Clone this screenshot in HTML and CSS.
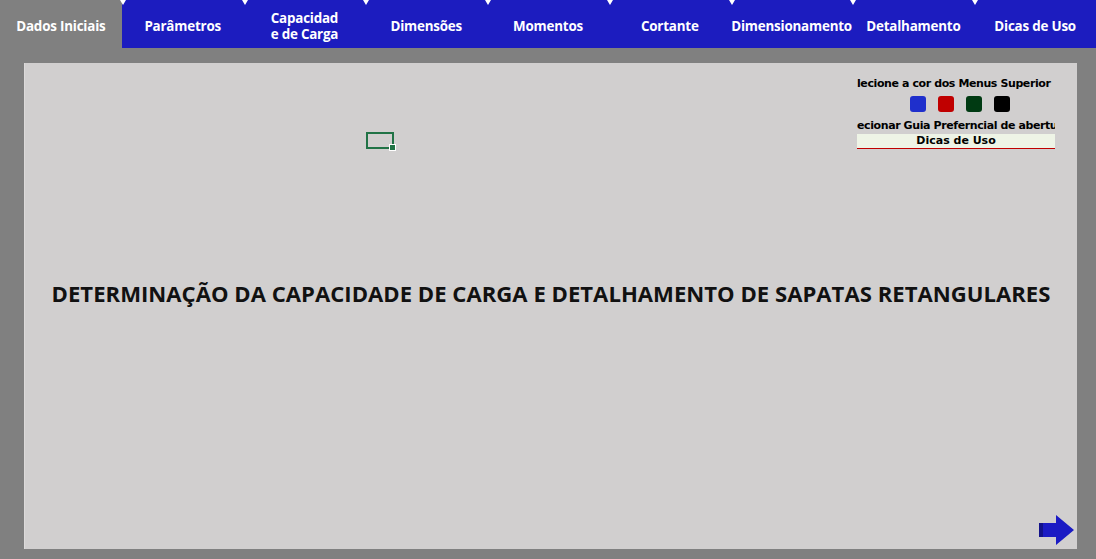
FILE: index.html
```html
<!DOCTYPE html>
<html lang="pt">
<head>
    <meta charset="UTF-8">
    <title>Sapatas Retangulares</title>
    <link rel="stylesheet" href="styles.css">
</head>
<body>
    <nav class="tabs">
        <div class="tab active">Dados Iniciais</div>
        <div class="tab">Parâmetros</div>
        <div class="tab">Capacidad<br>e de Carga</div>
        <div class="tab">Dimensões</div>
        <div class="tab">Momentos</div>
        <div class="tab">Cortante</div>
        <div class="tab">Dimensionamento</div>
        <div class="tab">Detalhamento</div>
        <div class="tab last">Dicas de Uso</div>
    </nav>

    <div class="sheet-area">
        <div class="sheet">
            <!-- selected cell -->
            <div class="cell-select"></div>

            <!-- menu colour picker -->
            <div class="picker">
                <p class="picker-label">lecione a cor dos Menus Superior</p>
                <div class="swatches">
                    <span class="swatch blue"></span>
                    <span class="swatch red"></span>
                    <span class="swatch green"></span>
                    <span class="swatch black"></span>
                </div>
                <p class="picker-label">ecionar Guia Preferncial de abertura</p>
                <div class="picker-field">Dicas de Uso</div>
            </div>

            <h1 class="title">DETERMINAÇÃO DA CAPACIDADE DE CARGA E DETALHAMENTO DE SAPATAS RETANGULARES</h1>

            <svg class="next-arrow" width="36" height="30" viewBox="0 0 36 30">
                <polygon points="0,8 17,8 17,0 35,15 17,30 17,22 0,22" fill="#1b1bc4"/>
                <rect x="0" y="8" width="4" height="14" fill="#12128a"/>
            </svg>
        </div>
    </div>
</body>
</html>
```

FILE: styles.css
```css
/* global styles */
* {
    margin: 0;
    padding: 0;
    box-sizing: border-box;
}

body {
    background: #808080;
    font-family: 'Open Sans', sans-serif;
    width: 1096px;
    height: 559px;
    overflow: hidden;
}

/* top tabs */
.tabs {
    display: flex;
    height: 48px;
    background: #1c1cbf;
}

.tab {
    position: relative;
    flex: 1;
    display: flex;
    align-items: center;
    justify-content: center;
    text-align: center;
    color: #fff;
    font-weight: 700;
    font-size: 13.4px;
    line-height: 16px;
    letter-spacing: -0.2px;
    padding-top: 4px;
}

.tab.active {
    background: #808080;
}

.tab::after {
    content: '';
    position: absolute;
    top: 0;
    right: -4px;
    border-left: 3px solid transparent;
    border-right: 3px solid transparent;
    border-top: 5px solid #fff;
    z-index: 2;
}

.tab.last::after {
    display: none;
}

/* sheet */
.sheet-area {
    padding: 15px 19px 10px 24px;
}

.sheet {
    position: relative;
    height: 486px;
    background: #d1cfcf;
    border-left: 1px solid #dcdada;
    display: flex;
    align-items: center;
    justify-content: center;
    padding-bottom: 26px;
}

.title {
    font-size: 22.1px;
    font-weight: 700;
    color: #111;
    letter-spacing: 0.02px;
    white-space: nowrap;
}

.cell-select {
    position: absolute;
    left: 341px;
    top: 69px;
    width: 28px;
    height: 17px;
    border: 2px solid #217346;
}

.cell-select::after {
    content: '';
    position: absolute;
    right: -4px;
    bottom: -4px;
    width: 5px;
    height: 5px;
    background: #217346;
    border: 1px solid #fff;
}

/* colour picker */
.picker {
    position: absolute;
    left: 832px;
    top: 13px;
    width: 198px;
    font-family: 'DejaVu Sans', sans-serif;
    font-weight: 700;
    font-size: 11px;
    color: #000;
}

.picker-label {
    height: 16px;
    line-height: 16px;
    white-space: nowrap;
    overflow: hidden;
    letter-spacing: -0.4px;
}

.swatches {
    display: flex;
    gap: 12px;
    padding: 4px 0 0 53px;
    height: 26px;
}

.swatch {
    width: 16px;
    height: 16px;
    border-radius: 3px;
}

.swatch.blue { background: #1f2fcc; }
.swatch.red { background: #c00000; }
.swatch.green { background: #003a12; }
.swatch.black { background: #000; }

.picker-field {
    height: 15px;
    line-height: 14px;
    background: #eef4e6;
    border-bottom: 1px solid #c00000;
    text-align: center;
    font-weight: 700;
}

.next-arrow {
    position: absolute;
    right: 2px;
    bottom: 4px;
}
```
